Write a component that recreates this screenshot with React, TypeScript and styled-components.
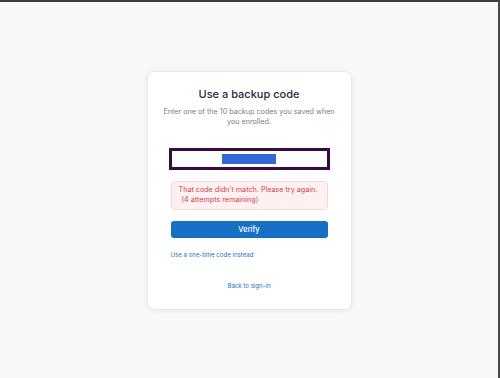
import React from "react";
import styled, { createGlobalStyle } from "styled-components";

const Global = createGlobalStyle`
  html, body { margin: 0; padding: 0; }
  body { font-family: Inter, "Noto Sans", sans-serif; background: #f7f8fa; }
  * { box-sizing: border-box; }
`;

const Page = styled.div`
  width: 500px;
  height: 378px;
  border-top: 2px solid #3f3f3f;
  border-right: 2px solid #4a4a4a;
  background: #f7f8fa;
  display: flex;
  align-items: center;
  justify-content: center;
`;

const Card = styled.div`
  width: 203px;
  height: 237px;
  background: #ffffff;
  border-radius: 6px;
  box-shadow: 0 1px 6px rgba(30, 40, 60, 0.09), 0 0 0 1px rgba(30, 40, 60, 0.03);
  padding: 13px 23px 18px;
  display: flex;
  flex-direction: column;
  align-items: stretch;
`;

const Title = styled.h1`
  margin: 0;
  font-size: 11px;
  line-height: 18px;
  font-weight: 500;
  color: #1f2a3c;
  text-align: center;
`;

const Subtitle = styled.p`
  margin: 4px -14px 0;
  font-size: 7.2px;
  line-height: 10px;
  color: #75808f;
  text-align: center;
  white-space: nowrap;
`;

const CodeField = styled.div`
  margin-top: 23px;
  height: 18px;
  border: 1px solid #3a0a45;
  outline: 2px solid #3a0a45;
  background: #fff;
  display: flex;
  align-items: center;
  justify-content: center;
`;

const Selection = styled.span`
  display: block;
  width: 54px;
  height: 10px;
  background: #3468d6;
`;

const ErrorBox = styled.div`
  margin-top: 13px;
  height: 29px;
  background: #fff1f1;
  border: 1px solid #f9d6d6;
  border-radius: 4px;
  padding: 3px 7px;
  font-size: 7.2px;
  line-height: 10px;
  color: #cf4349;
  white-space: nowrap;
`;

const Indent = styled.span`
  display: block;
  padding-left: 3px;
`;

const VerifyButton = styled.button`
  margin-top: 11px;
  height: 17px;
  border: none;
  border-radius: 3px;
  background: #1570c6;
  color: #ffffff;
  font-family: inherit;
  font-size: 7.5px;
  font-weight: 500;
  padding: 0;
`;

const Link = styled.a<{ $center?: boolean }>`
  display: block;
  font-size: 6.1px;
  line-height: 10px;
  color: #1e6fc0;
  text-decoration: none;
  text-align: ${(p) => (p.$center ? "center" : "left")};
`;

const AltLink = styled(Link)`
  margin-top: 12px;
`;

const BackLink = styled(Link)`
  margin-top: 21px;
`;

export default function App() {
  return (
    <>
      <Global />
      <Page>
        <Card>
          <Title>Use a backup code</Title>
          <Subtitle>
            Enter one of the 10 backup codes you saved when
            <br />
            you enrolled.
          </Subtitle>
          <CodeField>
            <Selection />
          </CodeField>
          <ErrorBox>
            That code didn’t match. Please try again.
            <Indent>(4 attempts remaining)</Indent>
          </ErrorBox>
          <VerifyButton>Verify</VerifyButton>
          <AltLink href="#">Use a one-time code instead</AltLink>
          <BackLink href="#" $center>
            Back to sign-in
          </BackLink>
        </Card>
      </Page>
    </>
  );
}
